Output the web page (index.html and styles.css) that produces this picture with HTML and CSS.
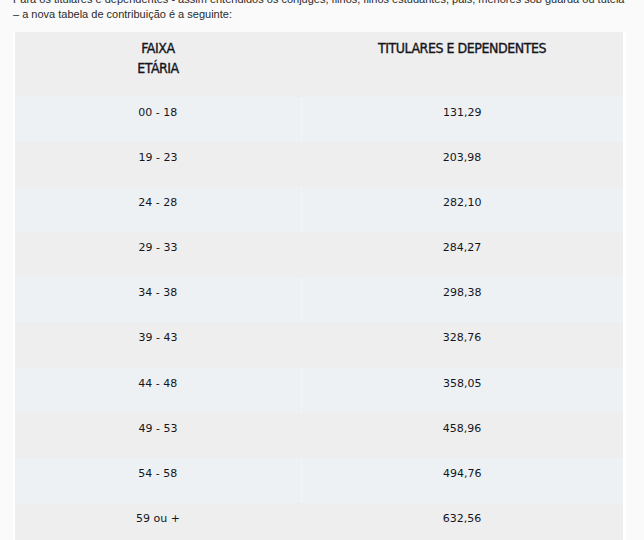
FILE: index.html
```html
<!DOCTYPE html>
<html lang="pt">
<head>
<meta charset="utf-8">
<title>Tabela de contribuição</title>
<link rel="stylesheet" href="styles.css">
</head>
<body>
<div class="page">
  <p class="intro">Para os titulares e dependentes - assim entendidos os cônjuges, filhos, filhos estudantes, pais, menores sob guarda ou tutela<br>– a nova tabela de contribuição é a seguinte:</p>
  <div class="frame">
    <table class="tabela">
      <thead>
        <tr>
          <th class="col-faixa">FAIXA<br>ETÁRIA</th>
          <th class="col-valor">TITULARES E DEPENDENTES</th>
        </tr>
      </thead>
      <tbody>
        <tr class="claro"><td>00 - 18</td><td>131,29</td></tr>
        <tr class="cinza"><td>19 - 23</td><td>203,98</td></tr>
        <tr class="claro"><td>24 - 28</td><td>282,10</td></tr>
        <tr class="cinza"><td>29 - 33</td><td>284,27</td></tr>
        <tr class="claro"><td>34 - 38</td><td>298,38</td></tr>
        <tr class="cinza"><td>39 - 43</td><td>328,76</td></tr>
        <tr class="claro"><td>44 - 48</td><td>358,05</td></tr>
        <tr class="cinza"><td>49 - 53</td><td>458,96</td></tr>
        <tr class="claro"><td>54 - 58</td><td>494,76</td></tr>
        <tr class="cinza"><td>59 ou +</td><td>632,56</td></tr>
      </tbody>
    </table>
  </div>
</div>
</body>
</html>
```

FILE: styles.css
```css
html, body {
  margin: 0;
  padding: 0;
  background: #f9faf9;
}

.page {
  padding-left: 13px;
  width: 625px;
}

.intro {
  margin: -8px 0 10px 0;
  font-family: "Liberation Sans", Arial, sans-serif;
  font-size: 11px;
  line-height: 15px;
  color: #2b2b2b;
  white-space: nowrap;
}

.frame {
  display: inline-block;
  background: #ffffff;
  padding: 0 3px 0 2px;
}

.tabela {
  width: 608px;
  border-collapse: collapse;
  font-family: "DejaVu Sans", Verdana, sans-serif;
  font-size: 11px;
  color: #15151c;
}

.tabela th {
  font-family: "DejaVu Sans Condensed", "DejaVu Sans", sans-serif;
  font-weight: normal;
  font-size: 14px;
  line-height: 20px;
  letter-spacing: -0.45px;
  -webkit-text-stroke: 0.35px #15151c;
  color: #15151c;
  background: #eeeeee;
  vertical-align: top;
  padding: 6px 0 19px 0;
  text-align: center;
}

.col-faixa {
  width: 286px;
}

.tabela td {
  line-height: 20px;
  padding: 6px 0 19.1px 0;
  text-align: center;
  vertical-align: top;
}

.claro td {
  background: #edf1f4;
}

.claro td + td {
  border-left: 1px solid #f2f5f7;
}

.cinza td {
  background: #eeeeee;
}
```
